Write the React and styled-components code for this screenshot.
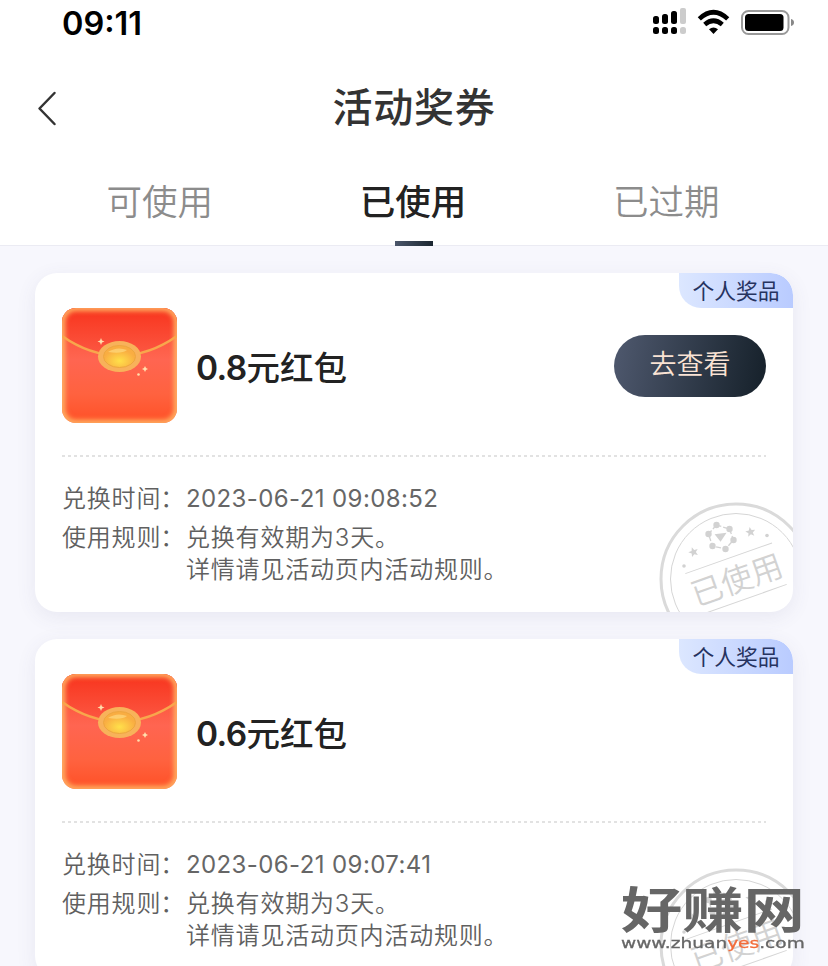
import styled, { createGlobalStyle } from "styled-components";

const GlobalStyle = createGlobalStyle`
  * {
    box-sizing: border-box;
  }

  body {
    margin: 0;
    background: #f7f7fd;
    font-family: Inter, "Noto Sans CJK SC", sans-serif;
    color: #222;
  }
`;

const Page = styled.div`
  position: relative;
  height: 966px;
  overflow: hidden;
  background: #f7f7fd;
`;

const Header = styled.header`
  height: 246px;
  background: #fff;
  border-bottom: 1px solid #ebebf3;
`;

const StatusBar = styled.div`
  display: flex;
  align-items: center;
  justify-content: space-between;
  height: 46px;
  padding: 0 34px 0 62px;
`;

const Clock = styled.span`
  padding-top: 1px;
  font-size: 32.5px;
  font-weight: 600;
  line-height: 46px;
  color: #000;
`;

const StatusIcons = styled.svg`
  display: block;
  width: 142px;
  height: 46px;
`;

const NavBar = styled.div`
  display: grid;
  grid-template-columns: 60px 1fr 60px;
  align-items: center;
  height: 122px;
  padding: 2px 16px 0;
`;

const BackButton = styled.button`
  display: flex;
  align-items: center;
  justify-content: center;
  height: 60px;
  padding: 0;
  border: 0;
  background: none;
`;

const Title = styled.h1`
  margin: 0;
  font-size: 40px;
  font-weight: 500;
  line-height: 60px;
  letter-spacing: 0.7px;
  text-align: center;
  color: #333;
`;

const Tabs = styled.nav`
  display: grid;
  grid-template-columns: repeat(3, 1fr);
  height: 78px;
  padding: 0 34px;
`;

const Tab = styled.div`
  display: flex;
  flex-direction: column;
  align-items: center;
  justify-content: space-between;
  font-size: 35.5px;
  font-weight: ${({ $active }) => ($active ? 500 : 350)};
  line-height: 69px;
  color: ${({ $active }) => ($active ? "#222" : "#8c8c8c")};

  &::after {
    content: "";
    width: 38px;
    height: 5px;
    background: ${({ $active }) =>
      $active ? "linear-gradient(90deg, #4b566a, #1b2630)" : "none"};
  }
`;

const TabLabel = styled.span`
  padding-right: 2px;
`;

const List = styled.main`
  display: flex;
  flex-direction: column;
  gap: 27px;
  padding: 27px 35px;
`;

const Card = styled.article`
  position: relative;
  flex: none;
  height: 339px;
  padding: 35px 27px 0;
  overflow: hidden;
  border-radius: 22px;
  background: #fff;
  box-shadow: 0 5px 20px rgba(80, 80, 120, 0.09);
`;

const Tag = styled.span`
  position: absolute;
  top: 0;
  right: 0;
  width: 114px;
  height: 35px;
  border-radius: 0 22px 0 22px;
  background: linear-gradient(90deg, #dce7ff, #b9cbff);
  font-size: 21.8px;
  line-height: 36px;
  text-align: center;
  color: #26335f;
`;

const Prize = styled.div`
  display: flex;
  align-items: center;
  height: 115px;
`;

const EnvelopeSvg = styled.svg`
  flex: none;
  width: 115px;
  height: 115px;
`;

const PrizeName = styled.h2`
  flex: 1;
  margin: 0 0 0 19px;
  padding-top: 4px;
  font-size: 33.5px;
  font-weight: 500;
  line-height: 48px;
  color: #222;
`;

const Amount = styled.span`
  font-weight: 600;
  letter-spacing: -0.6px;
`;

const ViewButton = styled.button`
  width: 152px;
  height: 62px;
  padding: 0 0 1px;
  border: 0;
  border-radius: 31px;
  background: linear-gradient(100deg, #4c566b 5%, #18232d 95%);
  font-family: inherit;
  font-size: 27px;
  font-weight: 350;
  line-height: 40px;
  color: #fae3d4;
`;

const Divider = styled.div`
  height: 2px;
  margin-top: 32px;
  background: repeating-linear-gradient(90deg, #e2e2e2 0 3px, transparent 3px 6px);
`;

const Details = styled.dl`
  display: grid;
  grid-template-columns: 124px 1fr;
  row-gap: 7px;
  margin: 26px 0 0;
  font-size: 24px;
  font-weight: 350;
  line-height: 32px;
  letter-spacing: 0.8px;
  color: #606060;
`;

const Label = styled.dt`
  white-space: nowrap;
`;

const Colon = styled.span`
  margin-left: -1px;
`;

const Value = styled.dd`
  margin: 0;
`;

const Time = styled.time`
  font-weight: 400;
  letter-spacing: 0.4px;
  color: #666;
`;

const StampSvg = styled.svg`
  position: absolute;
  left: 623px;
  top: 228px;
  width: 156px;
  height: 156px;
`;

const StampText = styled.text`
  font-size: 31.5px;
  font-weight: 350;
`;

const Watermark = styled.div`
  position: absolute;
  left: 621px;
  top: 884px;
  width: 186px;
  height: 70px;
  color: #666;
`;

const SiteName = styled.div`
  width: 148px;
  padding-top: 2px;
  font-size: 49px;
  font-weight: 700;
  line-height: 50px;
  white-space: nowrap;
  transform: scaleX(1.25);
  transform-origin: 0 0;
`;

const SiteUrl = styled.div`
  width: 148px;
  font-family: "DejaVu Sans", sans-serif;
  font-size: 14.5px;
  line-height: 14px;
  white-space: nowrap;
  -webkit-text-stroke: 0.3px currentColor;
  transform: scaleX(1.28);
  transform-origin: 0 0;

  b {
    color: #f26c3a;
    font-weight: 400;
  }
`;

const coupons = [
  { id: 1, amount: "0.8", time: "2023-06-21 09:08:52", canView: true },
  { id: 2, amount: "0.6", time: "2023-06-21 09:07:41", canView: false },
];

const tabs = ["可使用", "已使用", "已过期"];

const SignalWifiBattery = () => (
  <StatusIcons viewBox="652 0 142 46">
    <rect x="653" y="16" width="6" height="8" rx="2.5" />
    <rect x="662" y="14" width="6" height="10" rx="2.5" />
    <rect x="671" y="11" width="6" height="13" rx="2.5" />
    <rect x="680" y="8" width="6" height="16" rx="2" fill="#ccc" />
    <rect x="653" y="27" width="6" height="7" rx="2.5" />
    <rect x="662" y="27" width="6" height="7" rx="2.5" />
    <rect x="671" y="27" width="6" height="7" rx="2.5" />
    <rect x="680" y="27" width="6" height="7" rx="2.5" fill="#ccc" />
    <g fill="none" stroke="#000" strokeWidth="4.6">
      <path d="M699.3 18.9Q713.5 5.6 727.7 18.9" />
      <path d="M704.7 24.5Q713.5 17 722.3 24.5" />
    </g>
    <path d="M709 29.2Q713.5 26 718 29.2L713.5 34Z" />
    <rect x="742" y="11" width="46.5" height="23" rx="6.5" fill="#fff" stroke="#999" strokeWidth="2" />
    <rect x="745" y="14" width="38.5" height="17" rx="3.5" />
    <path d="M791 19Q794 19.6 794 22.5T791 26Z" fill="#888" />
  </StatusIcons>
);

const Envelope = ({ id }) => (
  <EnvelopeSvg viewBox="0 0 115 115">
    <defs>
      <linearGradient id={`body${id}`} x2="0" y2="1">
        <stop offset="0" stopColor="#f9482a" />
        <stop offset="0.45" stopColor="#ff6551" />
        <stop offset="0.75" stopColor="#ff623f" />
        <stop offset="1" stopColor="#ff5026" />
      </linearGradient>
      <linearGradient id={`flap${id}`} x2="0" y2="1">
        <stop offset="0" stopColor="#f8341d" />
        <stop offset="1" stopColor="#fc5843" />
      </linearGradient>
      <radialGradient id={`coin${id}`} cx="0.5" cy="0.7">
        <stop offset="0" stopColor="#ffe04a" />
        <stop offset="1" stopColor="#f9ad42" />
      </radialGradient>
      <clipPath id={`clip${id}`}>
        <rect width="115" height="115" rx="14" />
      </clipPath>
      <filter id={`glow${id}`} x="-10%" y="-10%" width="120%" height="120%" colorInterpolationFilters="sRGB">
        <feGaussianBlur stdDeviation="2.4" />
      </filter>
    </defs>
    <g clipPath={`url(#clip${id})`}>
      <rect width="115" height="115" fill={`url(#body${id})`} />
      <path d="M0 0H115V28C78 54 37 54 0 28Z" fill={`url(#flap${id})`} />
      <rect width="115" height="115" rx="14" fill="none" stroke="#ffb766" strokeWidth="6" filter={`url(#glow${id})`} />
      <path d="M0 28C37 54 78 54 115 28" fill="none" stroke="#f8a64c" strokeWidth="2.6" />
    </g>
    <ellipse cx="57.5" cy="48.5" rx="21.5" ry="15.5" fill="#f8b25a" />
    <ellipse cx="57.5" cy="48.5" rx="16" ry="11" fill={`url(#coin${id})`} stroke="#eda63f" />
    <path d="M46 44Q55 38 65 42Q60 46 46 44Z" fill="#ffe18a" opacity="0.6" />
    <g fill="#ffdfad">
      <path d="M39 30L40 32.5L42.5 33.5L40 34.5L39 37L38 34.5L35.5 33.5L38 32.5Z" />
      <path d="M83 58L84 60L86 61L84 62L83 64L82 62L80 61L82 60Z" />
      <circle cx="76.5" cy="66.5" r="1.3" />
    </g>
  </EnvelopeSvg>
);

const star = "M0-5L1.4-1.7L5-1.5L2.2.8L3.1 4.3L0 2.3L-3.1 4.3L-2.2.8L-5-1.5L-1.4-1.7Z";

const UsedStamp = () => (
  <StampSvg viewBox="-78 -78 156 156" fill="#d2d2d2" stroke="none">
    <circle r="75" fill="none" stroke="#dadada" strokeWidth="3" />
    <circle r="65.5" fill="none" stroke="#d6d6d6" />
    <g transform="rotate(-19.5)">
      <path d="M-46-22H46M-46 22H46" stroke="#d6d6d6" />
      <StampText x="0.5" y="12.5" textAnchor="middle">
        已使用
      </StampText>
    </g>
    <g transform="translate(-16.5 -42)">
      <path
        d="M-3-12L10-8L14 3L6 12L-7 9L-11-3Z"
        fill="none"
        stroke="#d2d2d2"
        strokeWidth="1.3"
        strokeDasharray="5 2"
      />
      <path d="M-3-2L5-3L1 3Z" stroke="#d2d2d2" strokeWidth="2" />
      <circle cx="-3" cy="-12" r="3.2" />
      <circle cx="10" cy="-8" r="3.2" />
      <circle cx="14" cy="3" r="3.2" />
      <circle cx="6" cy="12" r="3.2" />
      <circle cx="-7" cy="9" r="3.2" />
      <circle cx="-11" cy="-3" r="3.2" />
    </g>
    <path d={star} transform="translate(-42.5 -27) rotate(-20)" />
    <path d={star} transform="translate(14.5 -47) rotate(-10)" />
    <circle cx="-52" cy="-13" r="1.8" />
    <circle cx="31" cy="-43.5" r="1.8" />
  </StampSvg>
);

const CouponCard = ({ coupon }) => (
  <Card>
    <Tag>个人奖品</Tag>
    <Prize>
      <Envelope id={coupon.id} />
      <PrizeName>
        <Amount>{coupon.amount}</Amount>元红包
      </PrizeName>
      {coupon.canView && <ViewButton>去查看</ViewButton>}
    </Prize>
    <Divider />
    <Details>
      <Label>
        兑换时间<Colon>：</Colon>
      </Label>
      <Value>
        <Time>{coupon.time}</Time>
      </Value>
      <Label>
        使用规则<Colon>：</Colon>
      </Label>
      <Value>
        兑换有效期为3天。
        <br />
        详情请见活动页内活动规则。
      </Value>
    </Details>
    <UsedStamp />
  </Card>
);

export default function App() {
  return (
    <Page lang="zh-CN">
      <GlobalStyle />
      <Header>
        <StatusBar>
          <Clock>09:11</Clock>
          <SignalWifiBattery />
        </StatusBar>
        <NavBar>
          <BackButton aria-label="返回">
            <svg width="22" height="36" viewBox="0 0 22 36" fill="none" stroke="#333" strokeWidth="2.5">
              <path d="M19.5 3L4.5 18.5L19.5 34" strokeLinecap="round" strokeLinejoin="round" />
            </svg>
          </BackButton>
          <Title>活动奖券</Title>
        </NavBar>
        <Tabs>
          {tabs.map((tab, index) => (
            <Tab key={tab} $active={index === 1}>
              <TabLabel>{tab}</TabLabel>
            </Tab>
          ))}
        </Tabs>
      </Header>
      <List>
        {coupons.map((coupon) => (
          <CouponCard key={coupon.id} coupon={coupon} />
        ))}
      </List>
      <Watermark>
        <SiteName>好赚网</SiteName>
        <SiteUrl>
          www.zhuan<b>yes</b>.com
        </SiteUrl>
      </Watermark>
    </Page>
  );
}
